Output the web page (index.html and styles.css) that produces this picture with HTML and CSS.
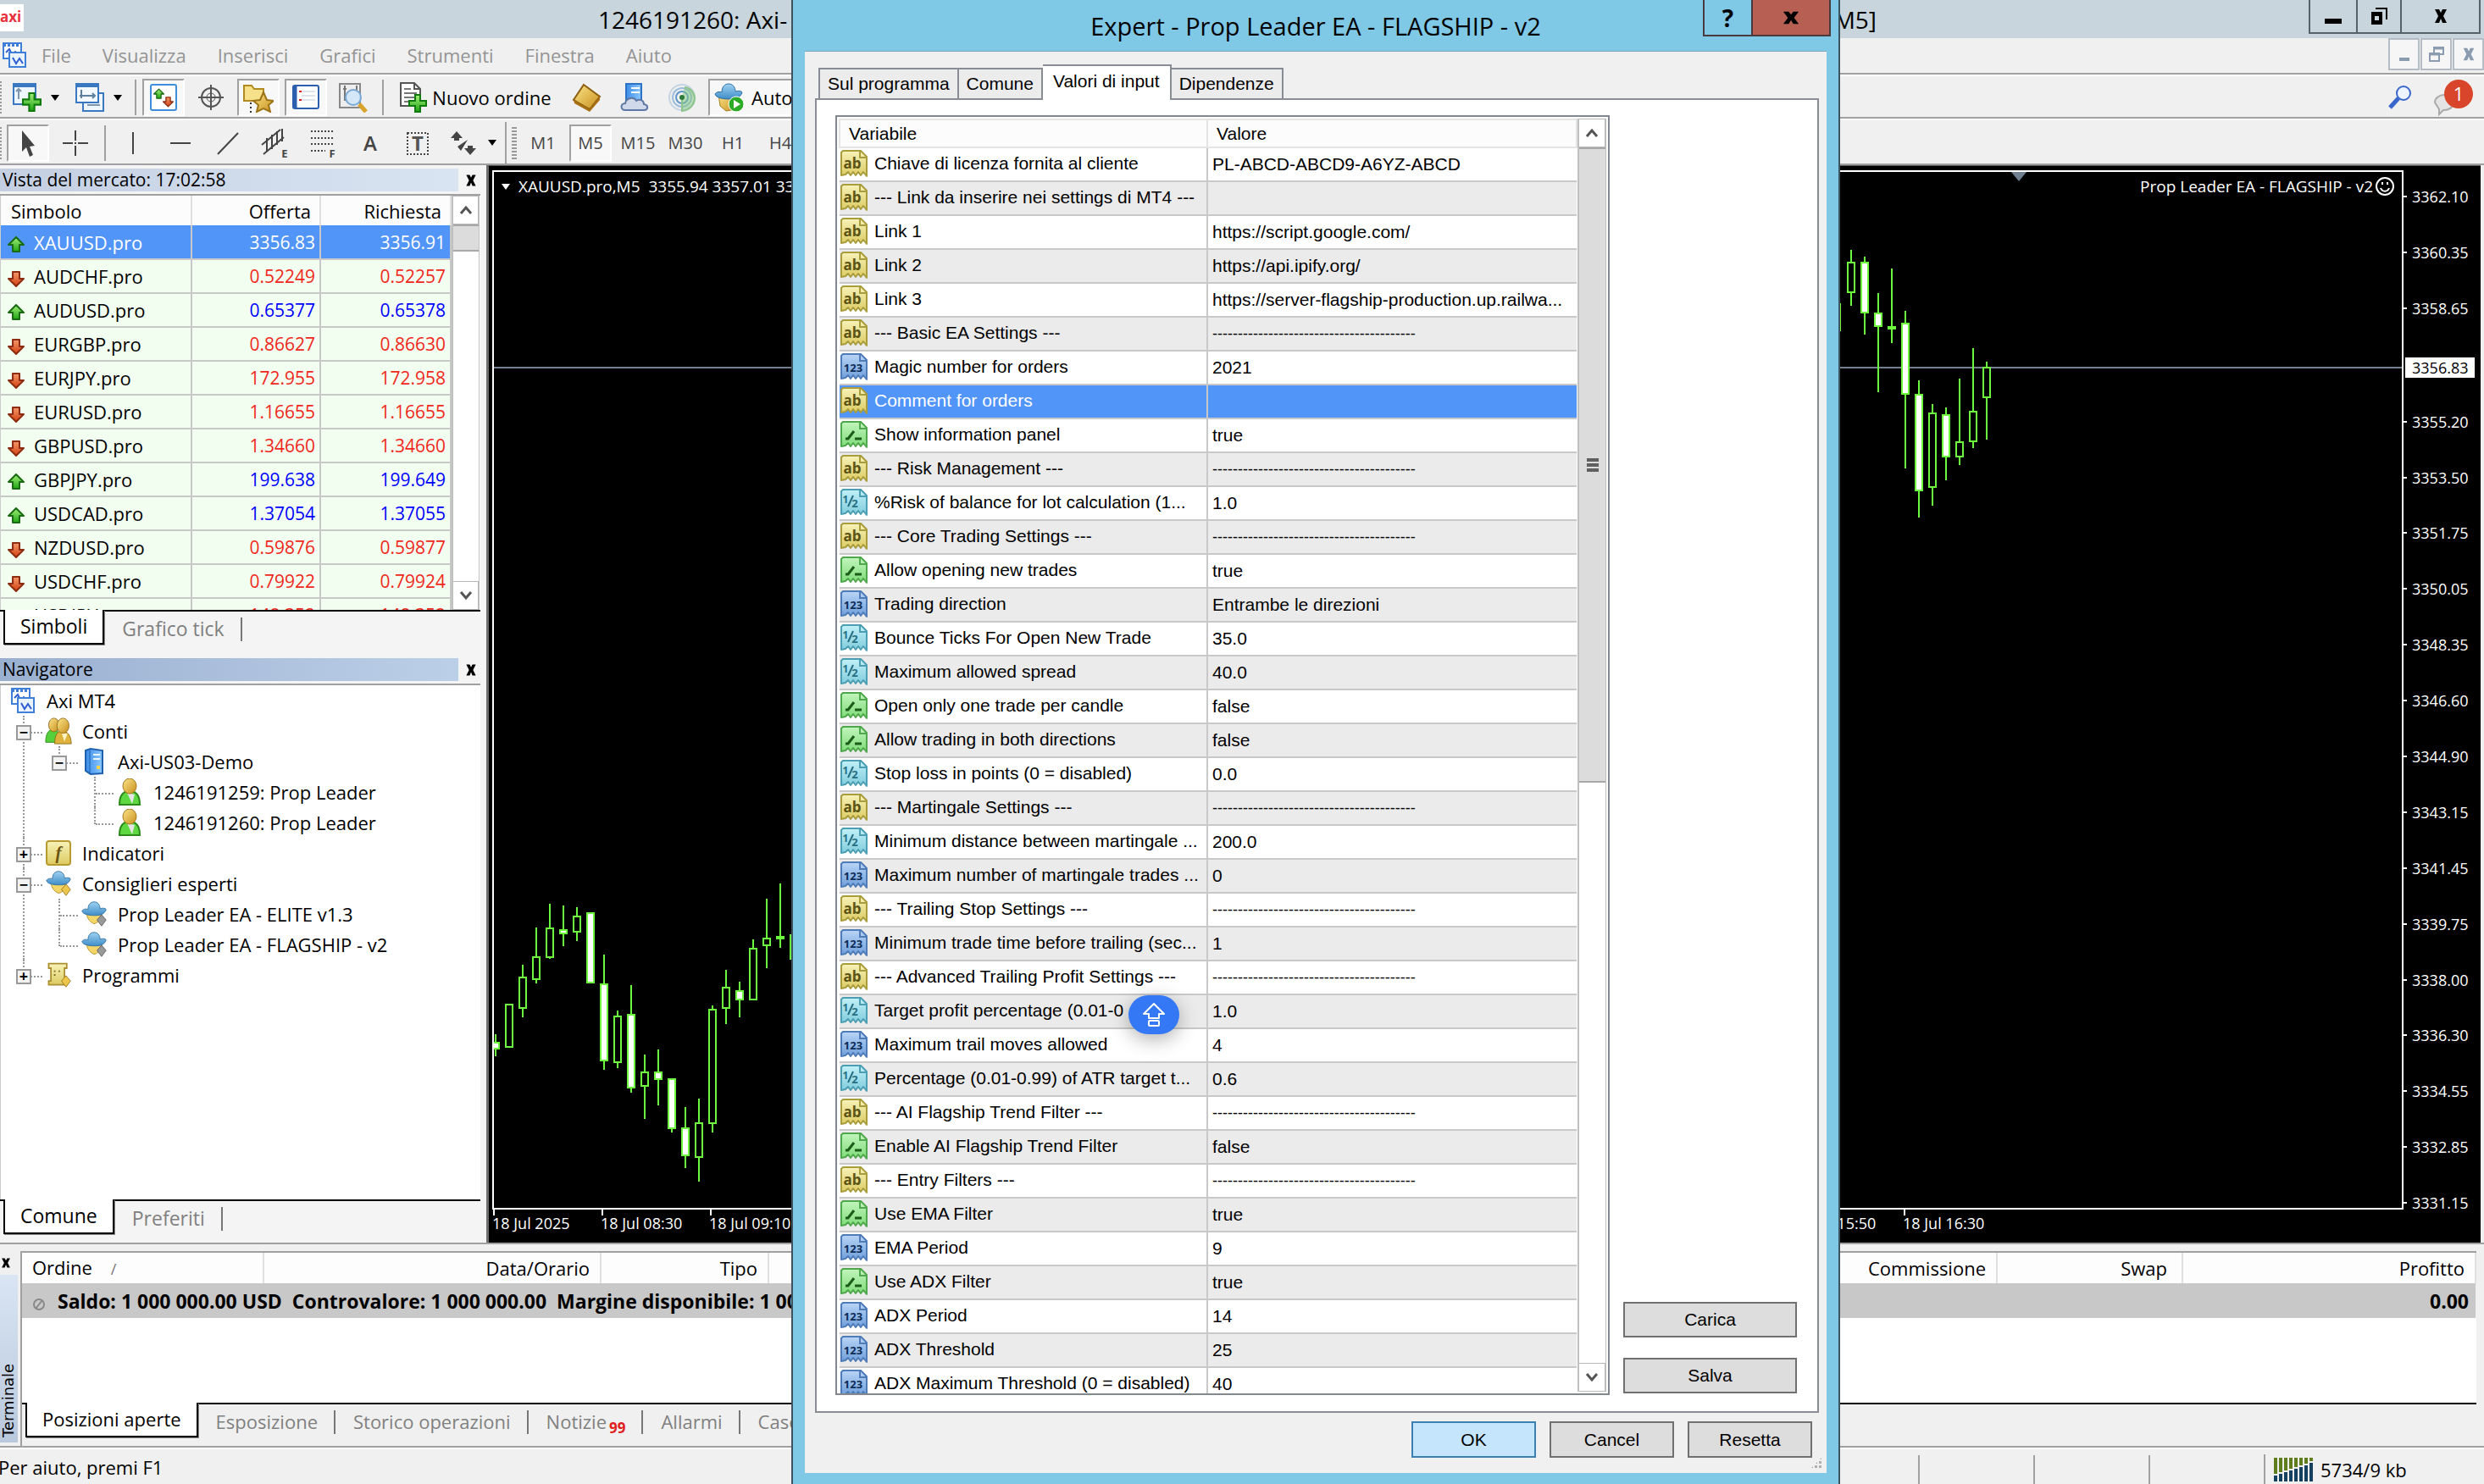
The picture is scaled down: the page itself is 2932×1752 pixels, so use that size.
FILE: index.html
```html
<!DOCTYPE html>
<html lang="it">
<head>
<meta charset="utf-8">
<title>Axi MT4</title>
<link rel="stylesheet" href="styles.css">
</head>
<body>
<svg class="defs" aria-hidden="true">
  <defs>
    <linearGradient id="gy" x2="0" y2="1"><stop offset="0" stop-color="#f7f2b8"/><stop offset="1" stop-color="#dccb62"/></linearGradient>
    <linearGradient id="gb" x2="0" y2="1"><stop offset="0" stop-color="#b9d5f5"/><stop offset="1" stop-color="#6d9edb"/></linearGradient>
    <linearGradient id="gg" x2="0" y2="1"><stop offset="0" stop-color="#c2f5bd"/><stop offset="1" stop-color="#7edb78"/></linearGradient>
    <linearGradient id="gc" x2="0" y2="1"><stop offset="0" stop-color="#c2f1f7"/><stop offset="1" stop-color="#7fcbdc"/></linearGradient>
    <linearGradient id="hat" x2="0" y2="1"><stop offset="0" stop-color="#9fd2f2"/><stop offset="1" stop-color="#3f8dc8"/></linearGradient>
    <linearGradient id="gold" x2="1" y2="1"><stop offset="0" stop-color="#fbe58a"/><stop offset="1" stop-color="#c98f1c"/></linearGradient>
    <linearGradient id="grn" x2="0" y2="1"><stop offset="0" stop-color="#a4f07c"/><stop offset="1" stop-color="#1fa312"/></linearGradient>
    <linearGradient id="redg" x2="0" y2="1"><stop offset="0" stop-color="#f59a6a"/><stop offset="1" stop-color="#cf3d10"/></linearGradient>
    <linearGradient id="srv" x2="1" y2="0"><stop offset="0" stop-color="#3b8de8"/><stop offset="1" stop-color="#8cc8ff"/></linearGradient>
  </defs>
  <symbol id="page" viewBox="0 0 32 32"><path d="M3 1H24L31 8V31L27 26 24 30 21 26 18 30 15 26 12 30 9 26 6 29 1 30V3Z" stroke-width="2" stroke-linejoin="round"/><path d="M23 1V9H31" fill="none" stroke-width="2"/></symbol>
  <symbol id="ab" viewBox="0 0 32 32"><use href="#page" fill="url(#gy)" stroke="#a99c3c"/><text x="14" y="22" class="ico-text" font-size="17" fill="#5c5414">ab</text></symbol>
  <symbol id="int" viewBox="0 0 32 32"><use href="#page" fill="url(#gb)" stroke="#4f7cb8"/><text x="15" y="22" class="ico-text" font-size="13" fill="#0e2c55">123</text></symbol>
  <symbol id="bool" viewBox="0 0 32 32"><use href="#page" fill="url(#gg)" stroke="#4fa84b"/><path d="M6 21h3l7-9M17 21h8" fill="none" stroke="#1c5c1a" stroke-width="3"/></symbol>
  <symbol id="dbl" viewBox="0 0 32 32"><use href="#page" fill="url(#gc)" stroke="#4c9fb2"/><path d="M15 8 9 21" stroke="#256f84" stroke-width="2"/><text x="6" y="17" class="ico-text" font-size="12" fill="#256f84">1</text><text x="17" y="22" class="ico-text" font-size="13" fill="#256f84">2</text></symbol>
  <symbol id="up" viewBox="0 0 20 20"><path d="M10 1 19 10H14V18H6V10H1Z" fill="url(#grn)" stroke="#1a6b14" stroke-width="2" stroke-linejoin="round"/></symbol>
  <symbol id="down" viewBox="0 0 20 20"><path d="M10 19 1 10H6V2H14V10H19Z" fill="url(#redg)" stroke="#8c2c10" stroke-width="2" stroke-linejoin="round"/></symbol>
  <symbol id="mt" viewBox="0 0 32 32"><rect x="3" y="2" width="21" height="18" fill="#fff" stroke="#3f7fd8" stroke-width="2"/><path d="M3 4H24" stroke="#3f7fd8" stroke-width="4" stroke-dasharray="3 2"/><path d="M6 13l4-4 3 6 4-3 4 4" fill="none" stroke="#2f5ed0" stroke-width="2"/><rect x="10" y="13" width="19" height="17" fill="#eaf4ff" stroke="#3f7fd8" stroke-width="2"/><path d="M14 19l4 7 4-6 4 6" fill="none" stroke="#2f5ed0" stroke-width="2"/></symbol>
  <symbol id="people" viewBox="0 0 36 36"><path d="M1 33c0-12 4-17 10-17s10 5 10 17z" fill="#55cf3a" stroke="#2c8a1c"/><ellipse cx="12" cy="10" rx="7" ry="9" fill="url(#gold)" stroke="#8d6a17"/><path d="M13 35c0-12 4-17 10-17s12 5 12 17z" fill="#e0b33c" stroke="#8d6a17"/><path d="M22 20l4 12 4-10z" fill="#fff2c4"/><ellipse cx="24" cy="11" rx="8" ry="10" fill="url(#gold)" stroke="#8d6a17"/></symbol>
  <symbol id="user" viewBox="0 0 32 32"><path d="M4 31c0-11 4-16 12-16s12 5 12 16z" fill="#5ed842" stroke="#2c8a1c" stroke-width="2"/><path d="M13 17l6 13 3-11z" fill="#e4e4e4"/><ellipse cx="16" cy="9" rx="8" ry="9" fill="url(#gold)" stroke="#a3761a"/></symbol>
  <symbol id="server" viewBox="0 0 32 32"><path d="M6 3 12 1 26 3V30L12 31 6 27Z" fill="url(#srv)" stroke="#1e5fae" stroke-width="2"/><path d="M11 3V30" stroke="#1e5fae"/><path d="M15 8h8M15 13h8" stroke="#e9f4ff" stroke-width="2"/><rect x="19" y="21" width="4" height="4" fill="#f3d34a"/></symbol>
  <symbol id="func" viewBox="0 0 32 32"><rect x="2" y="2" width="28" height="28" rx="3" fill="url(#gy)" stroke="#b79a30" stroke-width="2"/><text x="16" y="23" class="ico-text ico-f" font-size="21" fill="#6b5410">f</text></symbol>
  <symbol id="hatgold" viewBox="0 0 36 36"><path d="M8 15H28C28 24 24 30 18 31 11 28 8 22 8 15Z" fill="#f3d667" stroke="#b28d26"/><path d="M2 14c2-3 6-3 8-2 0-6 3-10 8-10s8 4 8 9c3-1 7-1 8 1-2 7-9 8-15 8S3 19 2 14Z" fill="url(#hat)" stroke="#2e6fa3"/><path d="M28 19 34 26 28 34 22 26Z" fill="#edc64c" stroke="#9b7417"/></symbol>
  <symbol id="hatgrey" viewBox="0 0 36 36"><path d="M8 15H28C28 24 24 30 18 31 11 28 8 22 8 15Z" fill="#f3d667" stroke="#b28d26"/><path d="M2 14c2-3 6-3 8-2 0-6 3-10 8-10s8 4 8 9c3-1 7-1 8 1-2 7-9 8-15 8S3 19 2 14Z" fill="url(#hat)" stroke="#2e6fa3"/><path d="M28 19 34 26 28 34 22 26Z" fill="#999" stroke="#5f5f5f"/></symbol>
  <symbol id="scroll" viewBox="0 0 36 36"><path d="M5 3H29V9H26V25H29V31H5V26H8V9H5Z" fill="url(#gy)" stroke="#ab8f30" stroke-width="2"/><path d="M12 13h2M18 13h2M12 18h2" stroke="#7d6617" stroke-width="2"/><path d="M28 19 34 26 28 34 22 26Z" fill="#edc64c" stroke="#9b7417"/></symbol>
  <symbol id="plus" viewBox="0 0 22 22"><path d="M8 1H14V8H21V14H14V21H8V14H1V8H8Z" fill="url(#grn)" stroke="#0f7a0c" stroke-width="2"/></symbol>
  <symbol id="caret-up" viewBox="0 0 20 20"><path d="M4 14 10 7 16 14" fill="none" stroke="#555" stroke-width="3"/></symbol>
  <symbol id="caret-down" viewBox="0 0 20 20"><path d="M4 6 10 13 16 6" fill="none" stroke="#555" stroke-width="3"/></symbol>
  <symbol id="cross" viewBox="0 0 20 20"><path d="M3 2H8L10 6 12 2H17L13 10 17 18H12L10 13 8 18H3L7 10Z" fill="currentColor"/></symbol>
</svg>

<div class="app">
  <header class="titlebar">
    <span class="logo">axi</span>
    <span class="title-left">1246191260: Axi-</span>
    <span class="title-right">M5]</span>
    <div class="win-controls">
      <button class="wc" aria-label="Riduci"><svg width="22" height="22"><path d="M1 14H21V20H1Z"/></svg></button>
      <button class="wc wc-mid" aria-label="Ripristina"><svg width="22" height="22"><path d="M2 6H15V21H2ZM6 11V16H11V11Z" fill-rule="evenodd"/><path d="M7 2H20V15" fill="none" stroke="#000" stroke-width="2"/></svg></button>
      <button class="wc wc-wide" aria-label="Chiudi"><svg width="24" height="20"><use href="#cross"/></svg></button>
    </div>
  </header>

  <nav class="menubar">
    <svg class="menu-logo" width="32" height="34"><use href="#mt"/></svg>
    <button>File</button><button>Visualizza</button><button>Inserisci</button><button>Grafici</button><button>Strumenti</button><button>Finestra</button><button>Aiuto</button>
    <div class="mdi">
      <button aria-label="Riduci grafico"><svg width="20" height="20"><path d="M4 14H16V18H4Z" fill="#8b9bb0"/></svg></button>
      <button aria-label="Ripristina grafico"><svg width="20" height="20"><path d="M7 8V2H18V10H13M2 9H13V18H2Z" fill="none" stroke="#8b9bb0" stroke-width="2"/><path d="M7 3H18M2 10H13" stroke="#8b9bb0" stroke-width="3"/></svg></button>
      <button class="grey" aria-label="Chiudi grafico"><svg width="18" height="18"><use href="#cross"/></svg></button>
    </div>
  </nav>

  <div class="toolbar">
    <i class="grip"></i>
    <button class="tb tb-drop" aria-label="Nuovo grafico"><svg width="36" height="36"><rect x="2" y="2" width="26" height="24" fill="#eef6ff" stroke="#3a78c2" stroke-width="2"/><path d="M2 4H28" stroke="#3a78c2" stroke-width="4"/><path d="M8 8V20M5 11l3-3 3 3" fill="none" stroke="#7f95ad" stroke-width="2"/><use href="#plus" x="12" y="12" width="23" height="23"/></svg><b class="arrow"></b></button>
    <button class="tb tb-drop" aria-label="Profili"><svg width="36" height="36"><rect x="10" y="13" width="24" height="21" fill="#eef6ff" stroke="#3a78c2" stroke-width="2"/><path d="M15 27H30" stroke="#7f95ad" stroke-width="2"/><rect x="2" y="2" width="26" height="22" fill="#f4f9ff" stroke="#3a78c2" stroke-width="2"/><path d="M2 4H28" stroke="#3a78c2" stroke-width="4"/><path d="M8 9V19M6 16H24M21 13l3 3-3 3" fill="none" stroke="#5f7f9f" stroke-width="2"/></svg><b class="arrow"></b></button>
    <i class="sep"></i>
    <button class="tb on" aria-label="Vista del mercato"><svg width="34" height="34"><rect x="2" y="2" width="30" height="30" rx="2" fill="#fff" stroke="#3d8edb" stroke-width="2"/><use href="#up" x="5" y="6" width="13" height="14"/><use href="#down" x="16" y="15" width="13" height="14"/></svg></button>
    <button class="tb" aria-label="Finestra dati"><svg width="32" height="32" fill="none" stroke="#555" stroke-width="2"><circle cx="16" cy="16" r="11"/><circle cx="16" cy="16" r="5" stroke-width="1"/><path d="M16 1V31M1 16H31"/></svg></button>
    <button class="tb on" aria-label="Navigatore"><svg width="36" height="36"><path d="M1 4H10L13 8H24V22H1Z" fill="#f6e08a" stroke="#b08a20" stroke-width="2"/><path d="M9 24V36" stroke="#333" stroke-width="2" stroke-dasharray="2 3"/><path d="M24 12 28 21 36 22 30 27 32 35 24 31 16 35 18 27 12 22 20 21Z" fill="url(#gold)" stroke="#9b7417" stroke-width="2"/></svg></button>
    <button class="tb on" aria-label="Terminale"><svg width="34" height="34"><rect x="2" y="3" width="30" height="27" rx="2" fill="#fff" stroke="#2b5fae" stroke-width="2"/><path d="M4 4V29" stroke="#2b5fae" stroke-width="5"/><path d="M12 10H28M12 15H28M12 20H28" stroke="#bcc8d8"/><path d="M9 10h3M9 20h3" stroke="#d22" stroke-width="2"/></svg></button>
    <button class="tb" aria-label="Strategy tester"><svg width="36" height="36"><path d="M2 2H26V30H2Z" fill="#eee" stroke="#888" stroke-width="2"/><path d="M8 4V22M6 8H10M22 4V12" stroke="#777" stroke-width="2"/><circle cx="18" cy="18" r="9" fill="#cfe6fa" fill-opacity=".9" stroke="#7aa8d4" stroke-width="2"/><path d="M25 26 33 35" stroke="#d9a42c" stroke-width="5"/></svg></button>
    <i class="sep"></i>
    <button class="tb tb-order"><svg width="34" height="36"><path d="M2 1H18L25 8V28H2Z" fill="#fff" stroke="#555" stroke-width="2"/><path d="M18 1V8H25" fill="none" stroke="#555" stroke-width="2"/><path d="M6 8H14M6 13H21M6 18H18M6 23H14" stroke="#777" stroke-width="2"/><use href="#plus" x="11" y="14" width="22" height="22"/></svg>Nuovo ordine</button>
    <button class="tb" aria-label="MetaEditor"><svg width="36" height="34"><path d="M14 2 33 16 21 31 2 20Z" fill="url(#gold)" stroke="#8d5f10" stroke-width="2"/><path d="M2 20 21 31 33 16 33 20 21 34 3 24Z" fill="#a86f14"/></svg></button>
    <button class="tb" aria-label="Cloud"><svg width="34" height="36"><path d="M7 2H25V24H7Z" fill="url(#srv)" stroke="#2d72c4" stroke-width="2"/><path d="M13 7H23M13 12H23" stroke="#fff" stroke-width="2"/><path d="M6 33C0 33 0 25 6 25 7 18 17 17 19 22 24 19 28 22 28 26 34 27 33 33 28 33Z" fill="#cfd9ea" stroke="#5e78a5" stroke-width="2"/></svg></button>
    <button class="tb" aria-label="Segnali"><svg width="34" height="34" fill="none" stroke-width="2"><circle cx="17" cy="17" r="15" stroke="#c5d4e2"/><circle cx="17" cy="17" r="11" stroke="#9dbddb"/><circle cx="17" cy="17" r="7" stroke="#5f96ca"/><path d="M17 17V33C28 32 32 24 32 17 30 8 24 5 20 5" fill="#7fc77f" fill-opacity=".5" stroke="#8cc48c"/><circle cx="17" cy="17" r="3" fill="#2d7a3a" stroke="none"/></svg></button>
    <button class="tb on tb-auto"><svg width="36" height="36"><path d="M5 14H29L26 32 14 34 7 28Z" fill="url(#gold)" stroke="#a8801c"/><path d="M1 14c2-3 6-3 8-2 0-6 3-10 8-10s8 4 8 9c3-1 7-1 8 1-2 7-9 8-15 8S2 19 1 14Z" fill="url(#hat)" stroke="#2e6fa3"/><circle cx="26" cy="26" r="9" fill="#2cab26" stroke="#fff"/><path d="M23 21 31 26 23 31Z" fill="#fff"/></svg>Auto</button>
    <div class="tb-right">
      <svg width="30" height="30" fill="none" stroke="#3a66cc" stroke-width="2"><circle cx="19" cy="10" r="8" fill="#eef4ff"/><path d="M13 16 3 27" stroke-width="5"/></svg>
      <svg width="48" height="44"><path d="M2 28a11 9 0 1 1 10 9l-5 5v-6Z" fill="#e4e4e4" stroke="#aaa" stroke-width="2"/><circle cx="30" cy="18" r="17" fill="#d8452a"/><text x="30" y="26" class="badge">1</text></svg>
    </div>
  </div>

  <div class="toolbar tools">
    <i class="grip"></i>
    <button class="tb on" aria-label="Cursore"><svg width="24" height="34"><path d="M5 2 20 20 14 21 18 31 14 33 10 22 5 27Z" fill="#444"/></svg></button>
    <button class="tb" aria-label="Mirino"><svg width="32" height="32"><path d="M16 1V13M16 19V31M1 16H13M19 16H31M15 16h2" stroke="#444" stroke-width="2"/></svg></button>
    <i class="sep"></i>
    <button class="tb" aria-label="Linea verticale"><svg width="32" height="32"><path d="M16 3V29" stroke="#444" stroke-width="2"/></svg></button>
    <button class="tb" aria-label="Linea orizzontale"><svg width="32" height="32"><path d="M4 16H28" stroke="#444" stroke-width="2"/></svg></button>
    <button class="tb" aria-label="Trendline"><svg width="32" height="32"><path d="M4 29 28 4" stroke="#444" stroke-width="2"/></svg></button>
    <button class="tb" aria-label="Canale"><svg width="36" height="36"><path d="M2 20 24 2M4 31 28 11M8 12V28M14 8V25M20 4V20M26 1V16" stroke="#444" stroke-width="2"/><text x="29" y="35" class="tool-sub">E</text></svg></button>
    <button class="tb" aria-label="Fibonacci"><svg width="34" height="36"><path d="M3 4H31M3 12H31M3 19H31M3 27H20" stroke="#444" stroke-width="2" stroke-dasharray="2 2"/><text x="28" y="35" class="tool-sub">F</text></svg></button>
    <button class="tb tool-letter">A</button>
    <button class="tb" aria-label="Etichetta"><svg width="32" height="32"><rect x="4" y="4" width="24" height="25" fill="none" stroke="#444" stroke-width="2" stroke-dasharray="2 2"/><text x="16" y="25" class="tool-t">T</text></svg></button>
    <button class="tb tb-drop" aria-label="Frecce"><svg width="36" height="34"><path d="M9 3 16 11H12V14H6V11H2ZM25 31 18 23H22V20H28V23H32ZM10 21l4 5 8-13" fill="#444"/></svg><b class="arrow"></b></button>
    <i class="edge"></i><i class="grip grip-wide"></i>
    <button class="tb">M1</button><button class="tb on">M5</button><button class="tb">M15</button><button class="tb">M30</button><button class="tb">H1</button><button class="tb">H4</button>
  </div>

  <div class="work">
    <aside class="side">
      <section class="market">
        <h2 class="pane-title">Vista del mercato: 17:02:58<button class="pane-x" aria-label="Chiudi vista"><svg width="18" height="16"><use href="#cross"/></svg></button></h2>
        <div class="market-body">
          <table class="quotes">
            <thead><tr><th>Simbolo</th><th>Offerta</th><th>Richiesta</th></tr></thead>
            <tbody>
              <tr class="sel"><td><svg><use href="#up"/></svg>XAUUSD.pro</td><td>3356.83</td><td>3356.91</td></tr>
              <tr class="dn"><td><svg><use href="#down"/></svg>AUDCHF.pro</td><td>0.52249</td><td>0.52257</td></tr>
              <tr class="rise"><td><svg><use href="#up"/></svg>AUDUSD.pro</td><td>0.65377</td><td>0.65378</td></tr>
              <tr class="dn"><td><svg><use href="#down"/></svg>EURGBP.pro</td><td>0.86627</td><td>0.86630</td></tr>
              <tr class="dn"><td><svg><use href="#down"/></svg>EURJPY.pro</td><td>172.955</td><td>172.958</td></tr>
              <tr class="dn"><td><svg><use href="#down"/></svg>EURUSD.pro</td><td>1.16655</td><td>1.16655</td></tr>
              <tr class="dn"><td><svg><use href="#down"/></svg>GBPUSD.pro</td><td>1.34660</td><td>1.34660</td></tr>
              <tr class="rise"><td><svg><use href="#up"/></svg>GBPJPY.pro</td><td>199.638</td><td>199.649</td></tr>
              <tr class="rise"><td><svg><use href="#up"/></svg>USDCAD.pro</td><td>1.37054</td><td>1.37055</td></tr>
              <tr class="dn"><td><svg><use href="#down"/></svg>NZDUSD.pro</td><td>0.59876</td><td>0.59877</td></tr>
              <tr class="dn"><td><svg><use href="#down"/></svg>USDCHF.pro</td><td>0.79922</td><td>0.79924</td></tr>
              <tr class="dn"><td><svg><use href="#down"/></svg>USDJPY.pro</td><td>148.352</td><td>148.352</td></tr>
            </tbody>
          </table>
          <div class="scroll"><button aria-label="Su"><svg width="20" height="20"><use href="#caret-up"/></svg></button><span class="thumb thumb-short"></span><span class="track"></span><button aria-label="Giù"><svg width="20" height="20"><use href="#caret-down"/></svg></button></div>
        </div>
        <div class="tabs"><button class="tab active">Simboli</button><button class="tab">Grafico tick</button></div>
      </section>
      <section class="navigator">
        <h2 class="pane-title focus">Navigatore<button class="pane-x" aria-label="Chiudi navigatore"><svg width="18" height="16"><use href="#cross"/></svg></button></h2>
        <div class="tree">
          <div class="node root"><svg><use href="#mt"/></svg>Axi MT4</div>
          <ul>
            <li><div class="node"><i class="exp">−</i><svg><use href="#people"/></svg>Conti</div>
              <ul><li><div class="node"><i class="exp">−</i><svg><use href="#server"/></svg>Axi-US03-Demo</div>
                <ul><li><div class="node leaf"><svg><use href="#user"/></svg>1246191259: Prop Leader</div></li><li><div class="node leaf"><svg><use href="#user"/></svg>1246191260: Prop Leader</div></li></ul>
              </li></ul>
            </li>
            <li><div class="node"><i class="exp">+</i><svg><use href="#func"/></svg>Indicatori</div></li>
            <li><div class="node"><i class="exp">−</i><svg><use href="#hatgold"/></svg>Consiglieri esperti</div>
              <ul><li><div class="node leaf"><svg><use href="#hatgrey"/></svg>Prop Leader EA - ELITE v1.3</div></li><li><div class="node leaf"><svg><use href="#hatgrey"/></svg>Prop Leader EA - FLAGSHIP - v2</div></li></ul>
            </li>
            <li><div class="node"><i class="exp">+</i><svg><use href="#scroll"/></svg>Programmi</div></li>
          </ul>
        </div>
        <div class="tabs"><button class="tab active">Comune</button><button class="tab">Preferiti</button></div>
      </section>
    </aside>

    <main class="chart">
      <div class="plot">
        <div class="plot-head"><span class="pair"><b class="arrow white"></b>XAUUSD.pro,M5&nbsp; 3355.94 3357.01 33</span><span class="ea">Prop Leader EA - FLAGSHIP - v2<svg width="24" height="24" fill="none" stroke="#fff" stroke-width="2"><circle cx="12" cy="12" r="10"/><path d="M7 14c2 5 8 5 10 0M9 7v3M15 7v3"/></svg></span></div>
        <svg class="candles"><g transform="translate(-583 -203)">
          <path d="M583 434H2838" stroke="#708090" stroke-width="2"/>
          <path d="M2374 203H2392L2383 214Z" fill="#708090"/>
          <path class="wick" d="M585 1221V1247M617 1139V1201M633 1095V1161M649 1067V1132M665 1069V1117M681 1071V1111M713 1127V1263M729 1193V1261M745 1163V1290M761 1245V1321M777 1239V1305M793 1274V1337M809 1307V1379M825 1297V1395M841 1187V1337M857 1145V1209M873 1159V1201M889 1109V1180M905 1061V1143M921 1043V1119M933 1103V1133M2172 358V391M2185 295V361M2201 303V395M2217 346V463M2233 317V405M2249 367V553M2265 449V611M2281 477V597M2297 481V567M2313 447V549M2329 411V529M2345 427V519"/>
          <path class="bull" d="M597 1186h8v50h-8zM613 1154h8v36h-8zM629 1130h8v26h-8zM645 1096h8v34h-8zM677 1082h8v18h-8zM725 1200h8v54h-8zM757 1266h8v16h-8zM821 1326h8v40h-8zM837 1192h8v134h-8zM853 1166h8v24h-8zM885 1120h8v60h-8zM901 1108h8v8h-8zM2181 310h8v35h-8zM2277 488h8v87h-8zM2309 522h8v17h-8zM2325 486h8v35h-8zM2341 434h8v35h-8z"/>
          <path class="bear" d="M581 1231h8v7h-8zM661 1098h8v4h-8zM693 1078h8v82h-8zM709 1162h8v90h-8zM741 1198h8v86h-8zM773 1266h8v8h-8zM789 1274h8v58h-8zM805 1332h8v32h-8zM869 1170h8v10h-8zM917 1106h8v2h-8zM2197 310h8v59h-8zM2213 370h8v15h-8zM2229 386h8v2h-8zM2245 382h8v83h-8zM2261 466h8v113h-8zM2293 490h8v49h-8z"/>
        </g></svg>
      </div>
      <div class="prices"><span>3362.10</span><span>3360.35</span><span>3358.65</span><span class="now">3356.83</span><span>3355.20</span><span>3353.50</span><span>3351.75</span><span>3350.05</span><span>3348.35</span><span>3346.60</span><span>3344.90</span><span>3343.15</span><span>3341.45</span><span>3339.75</span><span>3338.00</span><span>3336.30</span><span>3334.55</span><span>3332.85</span><span>3331.15</span></div>
      <div class="times"><span>18 Jul 2025</span><span>18 Jul 08:30</span><span>18 Jul 09:10</span><span class="gap"></span><span>18 Jul 15:50</span><span>18 Jul 16:30</span></div>
    </main>
  </div>

  <section class="terminal">
    <div class="strip"><button class="strip-x" aria-label="Chiudi terminale"><svg width="14" height="16"><use href="#cross"/></svg></button><span class="strip-label">Terminale</span></div>
    <div class="term-body">
      <table class="orders">
        <colgroup><col class="c1"><col class="c2"><col class="c3"><col><col class="c5"><col class="c6"></colgroup>
        <thead><tr><th>Ordine <span class="sort">/</span></th><th>Data/Orario</th><th>Tipo</th><th>Commissione</th><th>Swap</th><th>Profitto</th></tr></thead>
        <tbody><tr><td colspan="5"><svg width="16" height="18" fill="none" stroke="#888" stroke-width="2"><circle cx="8" cy="9" r="6"/><path d="M4 14 12 4"/></svg>Saldo: 1 000 000.00 USD&nbsp; Controvalore: 1 000 000.00&nbsp; Margine disponibile: 1 000 000.00</td><td>0.00</td></tr></tbody>
      </table>
      <div class="term-space"></div>
      <div class="tabs"><button class="tab active">Posizioni aperte</button><button class="tab">Esposizione</button><button class="tab">Storico operazioni</button><button class="tab">Notizie<sub>99</sub></button><button class="tab">Allarmi</button><button class="tab">Casella postale</button></div>
    </div>
  </section>

  <footer class="status"><span class="help">Per aiuto, premi F1</span><i></i><i></i><i></i><span class="traffic"><svg width="48" height="28"><path d="M3 0V19M9 0V17M15 0V15M21 0V13M27 0V11M33 0V9M39 0V7M45 0V4" stroke="#5f7d1c" stroke-width="4"/><path d="M3 21V28M9 19V28M15 17V28M21 15V28M27 13V28M33 11V28M39 9V28M45 6V28" stroke="#16405f" stroke-width="4"/></svg>5734/9 kb</span></footer>
</div>

<div class="dialog" role="dialog" aria-label="Expert">
  <header class="dlg-title">Expert - Prop Leader EA - FLAGSHIP - v2
    <div class="dlg-controls"><button class="q">?</button><button class="x" aria-label="Chiudi"><svg width="20" height="18" viewBox="0 0 22 18"><path d="M1 1H8L11 5 14 1H21L15 9 21 17H14L11 12 8 17H1L7 9Z"/></svg></button></div>
  </header>
  <div class="dlg-body">
    <div class="dlg-tabs"><button>Sul programma</button><button>Comune</button><button class="active">Valori di input</button><button>Dipendenze</button></div>
    <div class="sheet">
      <div class="grid">
        <table class="inputs">
          <thead><tr><th>Variabile</th><th>Valore</th></tr></thead>
          <tbody>
            <tr><td><svg><use href="#ab"/></svg>Chiave di licenza fornita al cliente</td><td>PL-ABCD-ABCD9-A6YZ-ABCD</td></tr>
            <tr><td><svg><use href="#ab"/></svg>--- Link da inserire nei settings di MT4 ---</td><td></td></tr>
            <tr><td><svg><use href="#ab"/></svg>Link 1</td><td>https://script.google.com/</td></tr>
            <tr><td><svg><use href="#ab"/></svg>Link 2</td><td>https://api.ipify.org/</td></tr>
            <tr><td><svg><use href="#ab"/></svg>Link 3</td><td>https://server-flagship-production.up.railwa...</td></tr>
            <tr><td><svg><use href="#ab"/></svg>--- Basic EA Settings ---</td><td class="rule">----------------------------------------</td></tr>
            <tr><td><svg><use href="#int"/></svg>Magic number for orders</td><td>2021</td></tr>
            <tr class="sel"><td><svg><use href="#ab"/></svg>Comment for orders</td><td></td></tr>
            <tr><td><svg><use href="#bool"/></svg>Show information panel</td><td>true</td></tr>
            <tr><td><svg><use href="#ab"/></svg>--- Risk Management ---</td><td class="rule">----------------------------------------</td></tr>
            <tr><td><svg><use href="#dbl"/></svg>%Risk of balance for lot calculation (1...</td><td>1.0</td></tr>
            <tr><td><svg><use href="#ab"/></svg>--- Core Trading Settings ---</td><td class="rule">----------------------------------------</td></tr>
            <tr><td><svg><use href="#bool"/></svg>Allow opening new trades</td><td>true</td></tr>
            <tr><td><svg><use href="#int"/></svg>Trading direction</td><td>Entrambe le direzioni</td></tr>
            <tr><td><svg><use href="#dbl"/></svg>Bounce Ticks For Open New Trade</td><td>35.0</td></tr>
            <tr><td><svg><use href="#dbl"/></svg>Maximum allowed spread</td><td>40.0</td></tr>
            <tr><td><svg><use href="#bool"/></svg>Open only one trade per candle</td><td>false</td></tr>
            <tr><td><svg><use href="#bool"/></svg>Allow trading in both directions</td><td>false</td></tr>
            <tr><td><svg><use href="#dbl"/></svg>Stop loss in points (0 = disabled)</td><td>0.0</td></tr>
            <tr><td><svg><use href="#ab"/></svg>--- Martingale Settings ---</td><td class="rule">----------------------------------------</td></tr>
            <tr><td><svg><use href="#dbl"/></svg>Minimum distance between martingale ...</td><td>200.0</td></tr>
            <tr><td><svg><use href="#int"/></svg>Maximum number of martingale trades ...</td><td>0</td></tr>
            <tr><td><svg><use href="#ab"/></svg>--- Trailing Stop Settings ---</td><td class="rule">----------------------------------------</td></tr>
            <tr><td><svg><use href="#int"/></svg>Minimum trade time before trailing (sec...</td><td>1</td></tr>
            <tr><td><svg><use href="#ab"/></svg>--- Advanced Trailing Profit Settings ---</td><td class="rule">----------------------------------------</td></tr>
            <tr><td><svg><use href="#dbl"/></svg>Target profit percentage (0.01-0<button class="float" aria-label="Maiuscole"><svg width="28" height="30" fill="none" stroke="#fff" stroke-width="2" stroke-linejoin="round"><path d="M14 2 26 14H20V19H8V14H2Z"/><rect x="8" y="22" width="12" height="6" rx="1"/></svg></button></td><td>1.0</td></tr>
            <tr><td><svg><use href="#int"/></svg>Maximum trail moves allowed</td><td>4</td></tr>
            <tr><td><svg><use href="#dbl"/></svg>Percentage (0.01-0.99) of ATR target t...</td><td>0.6</td></tr>
            <tr><td><svg><use href="#ab"/></svg>--- AI Flagship Trend Filter ---</td><td class="rule">----------------------------------------</td></tr>
            <tr><td><svg><use href="#bool"/></svg>Enable AI Flagship Trend Filter</td><td>false</td></tr>
            <tr><td><svg><use href="#ab"/></svg>--- Entry Filters ---</td><td class="rule">----------------------------------------</td></tr>
            <tr><td><svg><use href="#bool"/></svg>Use EMA Filter</td><td>true</td></tr>
            <tr><td><svg><use href="#int"/></svg>EMA Period</td><td>9</td></tr>
            <tr><td><svg><use href="#bool"/></svg>Use ADX Filter</td><td>true</td></tr>
            <tr><td><svg><use href="#int"/></svg>ADX Period</td><td>14</td></tr>
            <tr><td><svg><use href="#int"/></svg>ADX Threshold</td><td>25</td></tr>
            <tr><td><svg><use href="#int"/></svg>ADX Maximum Threshold (0 = disabled)</td><td>40</td></tr>
          </tbody>
        </table>
        <div class="scroll"><button aria-label="Su"><svg width="20" height="20"><use href="#caret-up"/></svg></button><span class="thumb thumb-long"><i></i></span><span class="track"></span><button aria-label="Giù"><svg width="20" height="20"><use href="#caret-down"/></svg></button></div>
      </div>
      <div class="side-buttons"><button class="btn">Carica</button><button class="btn">Salva</button></div>
    </div>
    <div class="dlg-actions"><button class="btn primary">OK</button><button class="btn">Cancel</button><button class="btn">Resetta</button></div>
    <i class="resize"></i>
  </div>
</div>
</body>
</html>
```

FILE: styles.css
```css
* { box-sizing: border-box; }
html, body { height: 100%; margin: 0; }
body {
  position: relative;
  overflow: hidden;
  background: #f0f0f0;
  color: #000;
  font: 22px/28px "Open Sans", "Noto Sans", sans-serif;
}
button { font: inherit; color: inherit; background: none; border: 0; padding: 0; margin: 0; white-space: nowrap; }
svg { flex: none; display: block; }
h2 { margin: 0; font-weight: 400; }
table { border-collapse: collapse; border-spacing: 0; table-layout: fixed; }
td, th { padding: 0; font-weight: 400; text-align: left; white-space: nowrap; overflow: hidden; }
.defs { position: absolute; width: 0; height: 0; visibility: hidden; }
.ico-text { font-family: "Open Sans", sans-serif; font-weight: 700; text-anchor: middle; stroke: none; }
.ico-f { font-family: "Liberation Serif", serif; font-style: italic; }

.app { display: flex; flex-direction: column; height: 100vh; min-height: 1000px; }

/* Title bar */
.titlebar { display: flex; height: 45px; background: #c8d5dc; font-size: 28px; line-height: 46px; white-space: nowrap; }
.logo { width: 28px; height: 32px; margin-top: 5px; background: #fff; color: #e8303e; font: 700 17px/30px "Open Sans", sans-serif; }
.title-left { margin-left: 678px; }
.title-right { margin-left: auto; margin-right: 510px; }
.win-controls { display: flex; height: 40px; margin-right: 4px; border: 2px solid #56626a; border-top: 0; }
.wc { display: grid; place-items: center; width: 54px; }
.wc + .wc { border-left: 2px solid #56626a; }
.wc-mid { width: 52px; }
.wc-wide { width: 93px; }

/* Menu */
.menubar { display: flex; align-items: center; gap: 37px; height: 45px; padding-bottom: 4px; border-bottom: 2px solid #fff; box-shadow: inset 0 -2px #a0a0a0; color: #949494; }
.menu-logo { margin: 0 -21px 0 1px; }
.mdi { display: flex; margin-left: auto; align-self: flex-start; gap: 1px; }
.mdi button { display: grid; place-items: center; width: 37px; height: 38px; background: #f6f6f6; border: 2px solid #b4bcc6; }
.mdi .grey { color: #8b9bb0; }

/* Toolbars */
.toolbar { display: flex; align-items: center; gap: 6px; height: 52px; border-bottom: 2px solid #fff; box-shadow: inset 0 -2px #a0a0a0; }
.tools { height: 53px; font-size: 20px; color: #444; border-bottom: 0; }
.grip { width: 2px; height: 38px; background: repeating-linear-gradient(#999 0 2px, transparent 2px 4px); }
.grip-wide { width: 6px; }
.tb { display: flex; align-items: center; justify-content: center; width: 50px; height: 44px; line-height: 26px; }
.tb.on { background: #f8f8f8; border: 2px solid #fff; border-top-color: #a0a0a0; border-left-color: #a0a0a0; }
.tb-drop { width: 68px; justify-content: space-between; padding: 0 6px; }
.arrow { border: 5px solid transparent; border-top: 7px solid #000; border-bottom: 0; }
.arrow.white { border-top-color: #fff; }
.sep { width: 6px; height: 42px; background: linear-gradient(90deg, transparent 3px, #a0a0a0 3px 5px, transparent 5px); }
.edge { width: 2px; height: 50px; margin-left: -2px; background: #a0a0a0; }
.tb-order { width: 202px; gap: 5px; }
.tb-auto { width: 120px; gap: 8px; justify-content: flex-start; padding-left: 5px; }
.tb-right { display: flex; gap: 24px; margin: 0 12px 0 auto; align-items: center; }
.badge { fill: #fff; font-size: 22px; text-anchor: middle; }
.tool-sub { font-size: 13px; font-weight: 700; text-anchor: middle; fill: #444; }
.tool-t { font-size: 24px; font-weight: 700; text-anchor: middle; fill: #555; }
.tool-letter { font-size: 24px; font-weight: 600; }

/* Work area */
.work { display: flex; flex: 1; min-height: 0; }
.side { display: flex; flex-direction: column; width: 577px; padding: 4px 7px 0 0; background: #f4f4f4; border-right: 3px solid #6e6e6e; }
.market { display: flex; flex-direction: column; flex: 0 0 578px; height: 578px; min-height: 0; }
.navigator { display: flex; flex-direction: column; flex: 1; min-height: 0; border-bottom: 7px solid #f4f4f4; }
.pane-title { display: flex; flex: none; justify-content: space-between; height: 32px; padding-left: 3px; background: linear-gradient(90deg, #c4d0e2, #d9e4f2) 0 0 / 541px 27px no-repeat; border-bottom: 2px solid #a0a0a0; font-size: 21px; line-height: 26px; }
.pane-title.focus { background-image: linear-gradient(90deg, #9ab0d0, #bccfe8); }
.pane-x { display: grid; place-items: center; width: 22px; height: 27px; }
.market-body { display: flex; align-items: stretch; flex: 1 1 0; min-height: 0; overflow: hidden; background: #fff; border-left: 1px solid #ccc; }
.quotes { width: 532px; align-self: flex-start; }
.quotes th { height: 35px; background: #fcfcfc; border-right: 2px solid #e0e0e0; }
.quotes th:first-child { width: 225px; padding-left: 12px; }
.quotes th:nth-child(2) { width: 152px; }
.quotes th + th, .quotes td + td { text-align: right; padding-right: 5px; }
.quotes th + th { padding-right: 10px; }
.quotes tbody tr { height: 40px; background: #f2fff0; border-bottom: 2px solid #c8c8c8; }
.quotes td { border-right: 2px solid #c8c8c8; }
.quotes td svg { display: inline-block; width: 20px; height: 20px; margin: 0 11px 0 8px; vertical-align: -4px; }
.quotes td + td { font-size: 21px; }
.quotes .dn td + td { color: #f0281c; }
.quotes .rise td + td { color: #0000ff; }
.quotes .sel { background: #5295f8; color: #fff; }
.scroll { display: flex; flex-direction: column; width: 33px; border-left: 2px solid #c0c0c0; border-right: 1px solid #c0c0c0; background: #fff; }
.scroll button { display: grid; place-items: center; height: 34px; border: 1px solid #b8b8b8; border-left: 0; }
.scroll .track { flex: 1; }
.thumb { background: #dcdcdc; border: 2px solid #a8a8a8; border-left: 0; border-right: 0; }
.thumb-short { height: 32px; }

.tabs { display: flex; flex: none; height: 44px; border-top: 2px solid #000; color: #808080; }
.tab { height: 40px; padding: 0 21px; position: relative; line-height: 36px; }
.tab.active { margin: -2px 0 0 4px; background: #fff; border: 2px solid #000; border-top: 0; color: #000; height: 41px; padding: 0 18px; line-height: 37px; box-shadow: 1px 1px #888; }
.tab:not(.active)::after { content: ""; position: absolute; right: 0; top: 7px; height: 28px; border-right: 2px solid #777; }
.tab sub { color: #e02020; font-size: 17px; font-weight: 700; line-height: 10px; margin-left: 3px; }
.side .tabs { font-size: 23px; }
.market .tabs { margin-bottom: 13px; }

.tree { flex: 1; min-height: 0; background: #fff; border-left: 1px solid #ccc; }
.tree ul { list-style: none; margin: 0; padding: 0; }
.tree ul ul { padding-left: 42px; }
.tree li { position: relative; }
.tree li::before { content: ""; position: absolute; left: 26px; top: 0; bottom: 0; border-left: 2px dotted #999; }
.tree li:last-child::before { bottom: auto; height: 20px; }
.node { position: relative; display: flex; align-items: center; height: 36px; padding-left: 18px; }
.node svg { width: 32px; height: 32px; margin: 0 12px 0 16px; }
.node.root { padding-left: 8px; }
.node.root svg { margin: 0 12px 0 2px; }
.node::before { content: ""; position: absolute; left: 28px; width: 21px; top: 19px; border-top: 2px dotted #999; }
.node.root::before { display: none; }
.node.leaf { padding-left: 36px; }
.exp { position: relative; width: 18px; height: 18px; background: #f2f2f2; border: 2px solid #999; font: 700 18px/13px "Open Sans", sans-serif; text-align: center; margin-top: 4px; }

/* Chart */
.chart { flex: 1; min-width: 0; display: grid; grid-template-columns: 1fr 91px; grid-template-rows: 1fr 39px; margin-right: 4px; padding: 5px 0 0 4px; background: #000; border-top: 1px solid #555; color: #fff; font-size: 18px; line-height: 24px; white-space: nowrap; }
.plot { position: relative; border: 2px solid #fff; overflow: hidden; }
.plot-head { display: flex; justify-content: space-between; padding: 5px 8px 0 9px; font-size: 19px; }
.pair, .ea { display: flex; align-items: center; }
.pair { gap: 10px; }
.ea { gap: 2px; }
.candles { position: absolute; inset: 0; width: 100%; height: 100%; }
.wick, .bull, .bear { stroke: #6cf83c; stroke-width: 2; }
.bull { fill: #000; }
.bear { fill: #fff; }
.prices { display: flex; flex-direction: column; margin: -2px 0 -25px; }
.prices span { flex: 1; display: flex; align-items: center; }
.prices span::before { content: ""; width: 4px; height: 2px; margin-right: 6px; background: #fff; }
.prices .now { flex: 0 0 22px; margin: 25px 7px 19px 2px; padding-left: 8px; background: #fff; color: #000; }
.prices .now::before { display: none; }
.times { display: flex; }
.times span { width: 128px; padding-top: 4px; background: linear-gradient(#fff, #fff) 1px 0 / 2px 7px no-repeat; }
.times .gap { flex: 1; background: none; }
.times span:last-child { width: 591px; }

/* Terminal */
.terminal { display: flex; height: 242px; padding-top: 8px; border-top: 2px solid #a0a0a0; border-bottom: 2px solid #a0a0a0; }
.strip { display: flex; flex-direction: column; width: 24px; }
.strip-x { height: 28px; display: grid; place-items: center start; }
.strip-label { flex: 1; width: 21px; writing-mode: vertical-rl; transform: rotate(180deg); padding-top: 6px; background: linear-gradient(#b9c8dc, #d9e5f3); font: 18px/20px "DejaVu Sans", sans-serif; margin-bottom: 4px; }
.term-body { flex: 1; min-width: 0; display: flex; flex-direction: column; margin-right: 9px; border-top: 2px solid #a0a0a0; border-left: 2px solid #a0a0a0; }
.orders { width: 100%; }
.c1 { width: 285px; }
.c2 { width: 398px; }
.c3 { width: 198px; }
.c5 { width: 219px; }
.c6 { width: 346px; }
.orders th { height: 36px; background: #fdfdfd; border-right: 2px solid #e0e0e0; text-align: right; padding-right: 12px; }
.orders th:first-child { text-align: left; padding-left: 12px; }
.orders th:nth-child(5) { padding-right: 17px; }
.sort { margin-left: 16px; color: #777; font-size: 18px; }
.orders td { height: 41px; background: #c8c8c8; font-weight: 700; font-size: 23px; }
.orders td svg { display: inline-block; margin: 0 14px 0 12px; vertical-align: -4px; }
.orders td + td { text-align: right; padding-right: 8px; }
.term-space { flex: 1; background: #fff; }
.term-body .tabs { margin-bottom: 7px; height: 44px; }

.status { display: flex; align-items: center; height: 43px; border-top: 2px solid #fff; }
.help { flex: 1; margin-left: -2px; }
.status i { width: 136px; height: 36px; border-left: 2px solid #a0a0a0; margin-top: 8px; }
.traffic { display: flex; align-items: center; gap: 8px; width: 260px; height: 36px; margin-top: 6px; padding-left: 9px; border-left: 2px solid #a0a0a0; }

/* Expert dialog */
.dialog { position: absolute; top: 0; bottom: 0; left: 934px; right: 760px; display: flex; flex-direction: column; padding: 0 14px 13px 14px; background: #7fc8e6; border: 2px solid #3d5360; border-top: 0; border-bottom: 0; font-family: "Liberation Sans", Arial, sans-serif; font-size: 21px; }
.dlg-title { position: relative; height: 61px; text-align: center; font: 29px/61px "Open Sans", sans-serif; border-bottom: 1px solid #79a5bb; }
.dlg-controls { position: absolute; top: 0; right: -5px; display: flex; height: 43px; border: 2px solid #4b3a3c; border-top: 0; }
.dlg-controls button { width: 55px; display: grid; place-items: center; font: 700 28px/36px "Open Sans", sans-serif; }
.dlg-controls .x { width: 92px; background: #b65f52; border-left: 2px solid #4b3a3c; }
.dlg-body { position: relative; flex: 1; min-height: 0; display: flex; flex-direction: column; background: #f0f0f0; padding: 15px 9px 0 12px; }
.dlg-tabs { display: flex; align-items: flex-end; height: 42px; padding-left: 4px; margin-bottom: -2px; position: relative; }
.dlg-tabs button { height: 38px; padding: 0 9px; border: 2px solid #898c95; background: #ececec; line-height: 34px; }
.dlg-tabs button + button { border-left: 0; }
.dlg-tabs .active { height: 42px; padding: 0 12px; background: #fff; border-bottom: 0; line-height: 34px; padding-bottom: 4px; }
.sheet { flex: 1; min-height: 0; display: flex; background: #fff; border: 2px solid #898c95; padding: 18px 24px 19px 22px; }
.grid { width: 914px; display: flex; overflow: hidden; border: 2px solid #828790; padding: 2px; background: #fff; }
.inputs { width: 872px; flex: none; }
.inputs th { height: 33px; background: #fcfcfc; border: 2px solid #e4e4e4; padding-left: 10px; }
.inputs th:first-child { width: 434px; }
.inputs tbody tr { height: 40px; border-bottom: 2px solid #c8c8c8; }
.inputs tbody tr:nth-child(even) { background: #ebebeb; }
.inputs tbody .sel, .inputs tbody tr.sel:nth-child(even) { background: #5295f8; color: #fff; }
.inputs td { border-right: 2px solid #c8c8c8; padding-left: 1px; }
.inputs td + td { padding-left: 5px; border-right: 0; }
.inputs td.rule { font-size: 18px; }
.inputs td > svg { display: inline-block; width: 32px; height: 32px; margin-right: 8px; vertical-align: middle; margin-top: -2px; }
.grid .scroll { flex: 1; width: auto; }
.thumb-long { height: 750px; display: grid; place-items: center; }
.thumb-long i { width: 14px; height: 16px; background: repeating-linear-gradient(#606060 0 4px, transparent 4px 6px); }
.float { position: absolute; z-index: 2; left: 382px; margin-top: -34px; width: 60px; height: 46px; border-radius: 23px; background: #3478f6; display: grid; place-items: center; box-shadow: 0 6px 22px rgba(0, 0, 0, .3); }
.side-buttons { flex: 1; display: flex; flex-direction: column; justify-content: flex-end; gap: 24px; margin: 0 0 2px 16px; }
.btn { height: 42px; background: #dddddd; border: 2px solid #707070; }
.dlg-actions { display: flex; justify-content: flex-end; gap: 16px; padding: 10px 8px 18px; }
.dlg-actions .btn { width: 147px; height: 43px; }
.btn.primary { background: #c4e5fb; border-color: #3c7fb1; }
.resize { position: absolute; right: 4px; bottom: 4px; width: 16px; height: 16px; background: radial-gradient(#b0b0b0 40%, transparent 45%) 0 0 / 5px 5px; clip-path: polygon(100% 0, 100% 100%, 0 100%); }
```
